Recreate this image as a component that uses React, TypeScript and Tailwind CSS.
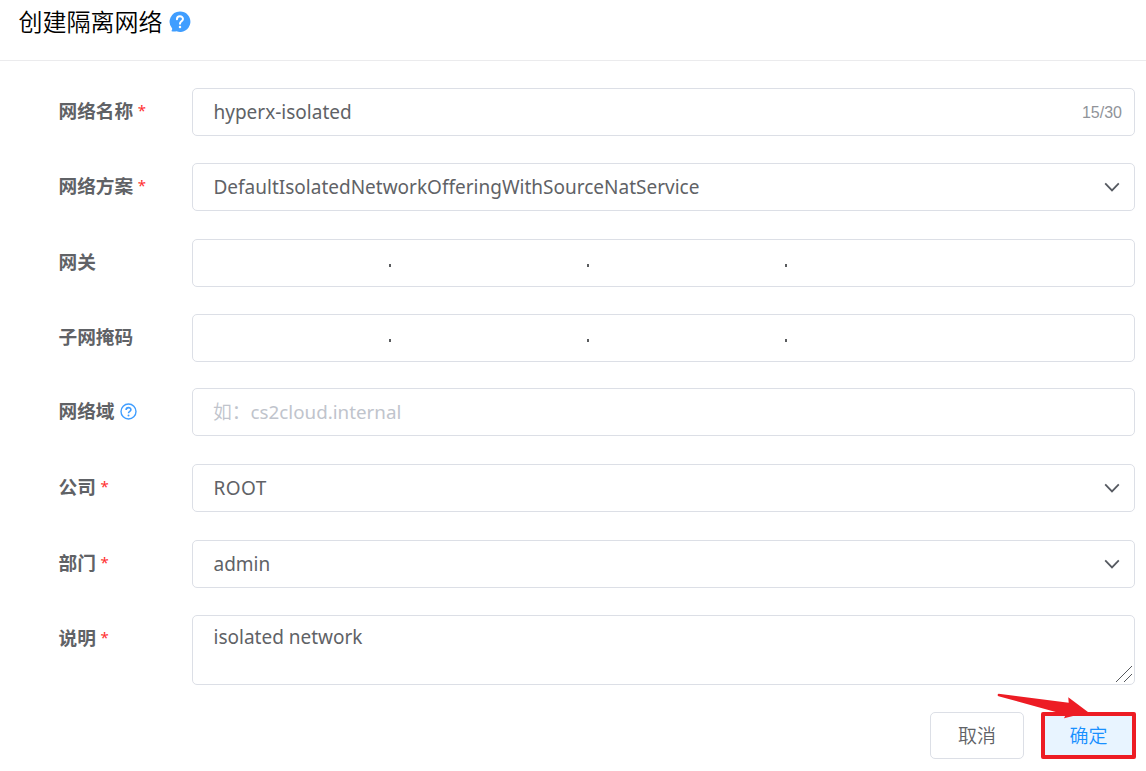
import type { ReactNode } from "react";

function Chevron() {
  return (
    <svg className="mr-[13px] shrink-0" width="18" height="12" viewBox="0 0 18 12" fill="none">
      <path d="M2.2 2.4 9 9.4l6.8-7" stroke="#565a61" strokeWidth="1.8" />
    </svg>
  );
}

function Dots() {
  return (
    <div className="flex w-[594px] justify-between pt-[5px] pl-[196px]">
      <i className="h-[3px] w-[2px] bg-[#5a5c5f]" />
      <i className="h-[3px] w-[2px] bg-[#5a5c5f]" />
      <i className="h-[3px] w-[2px] bg-[#5a5c5f]" />
    </div>
  );
}

type RowProps = {
  label: string;
  required?: boolean;
  hint?: ReactNode;
  margin: string;
  tall?: boolean;
  children: ReactNode;
};

function Row({ label, required, hint, margin, tall, children }: RowProps) {
  return (
    <div className={`flex ${margin}`}>
      <div className="flex h-12 w-[192px] shrink-0 items-center pl-[58.5px] text-[18.7px] font-bold whitespace-nowrap">
        <span className="-mt-px">{label}</span>
        {required && <span className="-mt-[3px] ml-[4.5px] font-['Noto_Sans'] text-[15px] font-normal text-[#ff3030]">*</span>}
        {hint}
      </div>
      <div
        className={`relative flex w-[943px] rounded-[5px] border border-[#dcdfe6] ${tall ? "h-[70px] items-start pt-[8px]" : "h-12 items-center"}`}
      >
        {children}
      </div>
    </div>
  );
}

function Value({ children, spacing = "" }: { children: string; spacing?: string }) {
  return <span className={`grow pl-[20.5px] text-[19px] leading-[26px] whitespace-nowrap ${spacing}`}>{children}</span>;
}

export default function App() {
  return (
    <div className="h-[771px] w-[1146px] overflow-hidden bg-white font-['Noto_Sans','Noto_Sans_CJK_SC',sans-serif] text-[#606266]">
      <header className="flex h-[61px] items-start border-b border-[#ebebed] pl-[18.5px]">
        <h1 className="mt-[4px] text-[24px] leading-[36px] font-[350] text-black">创建隔离网络</h1>
        <svg className="mt-[11px] ml-[6px]" width="22" height="22" viewBox="0 0 23 23">
          <path d="M11.3.5a10.7 10.7 0 1 1-3.4 20.7c-2 .5-3.8.5-5.6-.2.8-.7 1.2-1.7 1-2.8A10.7 10.7 0 0 1 11.3.5Z" fill="#409eff" />
          <path d="M8.3 8.5c0-4 6.3-4 6.3-.1 0 2.3-3.1 2.5-3.1 4.9" fill="none" stroke="#fff" strokeWidth="2.1" strokeLinecap="round" />
          <circle cx="11.5" cy="16.8" r="1.3" fill="#fff" />
        </svg>
      </header>

      <Row label="网络名称" required margin="mt-[27px]">
        <Value>hyperx-isolated</Value>
        <span className="mt-px mr-3 font-['Liberation_Sans'] text-[16px] text-[#909399]">15/30</span>
      </Row>
      <Row label="网络方案" required margin="mt-[27px]">
        <Value>DefaultIsolatedNetworkOfferingWithSourceNatService</Value>
        <Chevron />
      </Row>
      <Row label="网关" margin="mt-[28px]">
        <Dots />
      </Row>
      <Row label="子网掩码" margin="mt-[27px]">
        <Dots />
      </Row>
      <Row
        label="网络域"
        margin="mt-[26px]"
        hint={
          <svg className="-mt-[1px] ml-[5px]" width="17" height="17" viewBox="0 0 17 17" fill="none">
            <circle cx="8.5" cy="8.5" r="7.5" stroke="#409eff" strokeWidth="1.4" />
            <path d="M6.1 6.9c0-3 4.8-3 4.8-.1 0 1.6-2.4 1.7-2.4 3.4" stroke="#409eff" strokeWidth="1.6" />
            <circle cx="8.5" cy="12.4" r="1" fill="#409eff" />
          </svg>
        }
      >
        <span className="pl-5 text-[18.8px] leading-[26px] font-[350] whitespace-nowrap text-[#c0c4cc]">
          如：<span className="font-normal">cs2cloud.internal</span>
        </span>
      </Row>
      <Row label="公司" required margin="mt-[28px]">
        <Value spacing="tracking-[0.4px]">ROOT</Value>
        <Chevron />
      </Row>
      <Row label="部门" required margin="mt-[28px]">
        <Value>admin</Value>
        <Chevron />
      </Row>
      <Row label="说明" required margin="mt-[27px]" tall>
        <Value>isolated network</Value>
        <svg className="absolute right-[1px] bottom-[1px]" width="18" height="18" viewBox="0 0 18 18" stroke="#55585c" strokeWidth="1">
          <path d="M1 17 17 1M9 17l8-8" />
        </svg>
      </Row>

      <div className="relative mt-[27px] flex justify-end gap-[17px] pr-[10px] text-[19px]">
        <button className="h-[47px] w-[94px] rounded-[5px] border border-[#dcdfe6] pt-[2px] font-[350]">取消</button>
        <button className="h-[47px] w-[95px] rounded-[2px] border-4 border-[#ed1c24] bg-[#e8f4ff] pt-[2px] font-[350] text-[#1890ff]">确定</button>
        <svg className="absolute -top-[20px] right-[56px]" width="94" height="28" viewBox="0 0 94 28">
          <path d="M2.6 1.7 72.7 10.7 72.3 5.3 92.3 20.3 68 26.2 69.7 22.7 2.5 4.2A1.3 1.3 0 0 1 2.6 1.7Z" fill="#ed1c24" />
        </svg>
      </div>
    </div>
  );
}
